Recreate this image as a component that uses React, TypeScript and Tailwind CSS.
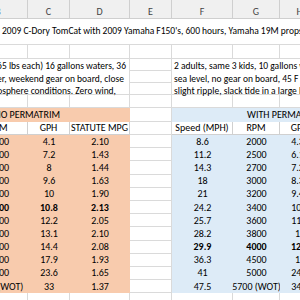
import clsx from 'clsx'

// column widths: B (clipped), C, D, E, F, G, H (clipped)
const W = ['w-[28px]', 'w-[42px]', 'w-[60px]', 'w-[42px]', 'w-[61px]', 'w-[47px]', 'w-[40px]']
const GRID = 'border-r border-b border-[#dadada]'
const ORANGE = 'bg-[#f8cbad]'
const BLUE = 'bg-[#ddebf7]'

const left = [
    ['2000', '4.1', '2.10'],
    ['2500', '7.2', '1.43'],
    ['2700', '8', '1.44'],
    ['3000', '9.6', '1.63'],
    ['3200', '10', '1.90'],
    ['3400', '10.8', '2.13'],
    ['3600', '12.2', '2.05'],
    ['3800', '13.1', '2.10'],
    ['4000', '14.4', '2.08'],
    ['4500', '17.9', '1.93'],
    ['5000', '23.6', '1.65'],
    ['5700 (WOT)', '33', '1.37'],
]

const right = [
    ['8.6', '2000', '4.35'],
    ['11.2', '2500', '6.10'],
    ['14.3', '2700', '7.25'],
    ['18', '3000', '8.30'],
    ['21', '3200', '9.40'],
    ['24.2', '3400', '10.5'],
    ['25.7', '3600', '11.4'],
    ['28.2', '3800', '13'],
    ['29.9', '4000', '12.6'],
    ['36.3', '4500', '17'],
    ['41', '5000', '24.1'],
    ['47.5', '5700 (WOT)', '34.7'],
]

function BCell({ children, className }: { children?: React.ReactNode; className?: string }) {
    // column B is cut by the left edge, its text centre sits just left of x=0
    return (
        <div className={clsx('shrink-0 flex justify-end items-center', W[0], className)}>
            <div className="w-[58px] shrink-0 text-center whitespace-nowrap">{children}</div>
        </div>
    )
}

function Cell({ i, children, className }: { i: number; children?: React.ReactNode; className?: string }) {
    return (
        <div className={clsx('shrink-0 flex items-center justify-center whitespace-nowrap', W[i], className)}>
            {children}
        </div>
    )
}

function EmptyRow({ h }: { h: string }) {
    return (
        <div className={clsx('flex', h)}>
            {W.map((_, i) => (
                <Cell key={i} i={i} className={GRID} />
            ))}
        </div>
    )
}

export default function App() {
    return (
        <div
            className="w-[300px] h-[300px] overflow-hidden bg-white text-[10px] leading-none text-black"
            style={{ fontFamily: 'Carlito, Calibri, Lato, "Open Sans", sans-serif' }}
        >
            {/* Column letters */}
            <div className="flex h-[19px] bg-[#f0f0f0] text-[#444]">
                <BCell className="border-r border-b border-[#cfcfcf] pt-[5px]">B</BCell>
                {['C', 'D', 'E', 'F', 'G', 'H'].map((l, k) => (
                    <Cell key={l} i={k + 1} className="border-r border-b border-[#cfcfcf] pt-[5px]">
                        {l}
                    </Cell>
                ))}
            </div>

            {/* Title */}
            <div className="flex items-center h-[26px] pl-[2px] border-b border-[#dadada] whitespace-nowrap text-[9.5px]">
                2009 C-Dory TomCat with 2009 Yamaha F150's, 600 hours, Yamaha 19M props, 14 x 19 pitch
            </div>

            <EmptyRow h="h-[14px]" />

            {/* Load descriptions */}
            <div className="flex h-[36px] text-[9.5px]">
                <div className="w-[130px] shrink-0 border-r border-b border-[#dadada] pt-[1px] leading-[12.5px]">
                    <div className="flex justify-end pr-[3px]">
                        <span className="shrink-0 whitespace-nowrap">3 kids (65 lbs each) 16 gallons waters, 36</span>
                    </div>
                    <div className="flex justify-end pr-[5px]">
                        <span className="shrink-0 whitespace-nowrap">gallons fuel, cooler, weekend gear on board, close</span>
                    </div>
                    <div className="flex justify-end pr-[13px]">
                        <span className="shrink-0 whitespace-nowrap">to sea level, standard atmosphere conditions. Zero wind,</span>
                    </div>
                </div>
                <div className="w-[42px] shrink-0 flex flex-col">
                    <div className={clsx('h-[12px]', GRID)} />
                    <div className={clsx('h-[12px]', GRID)} />
                    <div className={clsx('h-[12px]', GRID)} />
                </div>
                <div className="flex-1 border-b border-[#dadada] pl-[2px] pt-[1px] leading-[12.5px] whitespace-nowrap">
                    <div>2 adults, same 3 kids, 10 gallons water, 20 gallons fuel,</div>
                    <div>sea level, no gear on board, 45 F degrees, flat water,</div>
                    <div>slight ripple, slack tide in a large bay.</div>
                </div>
            </div>

            <EmptyRow h="h-[13px]" />

            {/* Table titles */}
            <div className="flex h-[14px]">
                <div className={clsx('w-[130px] shrink-0 flex items-center', ORANGE)}>
                    <div className="w-[60px] shrink-0 flex justify-end">
                        <span className="shrink-0 whitespace-nowrap">NO PERMATRIM</span>
                    </div>
                </div>
                <Cell i={3} className={GRID} />
                <div className={clsx('flex-1 flex items-center pl-[75px] whitespace-nowrap', BLUE)}>
                    WITH PERMATRIM
                </div>
            </div>

            {/* Column titles */}
            <div className="flex h-[13px]">
                <BCell className="border-r border-b border-[#d0d0d0]">RPM</BCell>
                <Cell i={1} className="border-r border-b border-[#d0d0d0]">GPH</Cell>
                <Cell i={2} className="border-r border-b border-[#d0d0d0]">STATUTE MPG</Cell>
                <Cell i={3} className={GRID} />
                <Cell i={4} className="border-r border-b border-[#d0d0d0]">Speed (MPH)</Cell>
                <Cell i={5} className="border-r border-b border-[#d0d0d0]">RPM</Cell>
                <Cell i={6} className="border-r border-b border-[#d0d0d0]">GPH</Cell>
            </div>

            {/* Data */}
            {left.map((row, r) => {
                const rr = right[r]
                return (
                    <div key={r} className="flex h-[13.2px]">
                        <BCell className={clsx(ORANGE, r === 5 && 'font-bold')}>{row[0]}</BCell>
                        <Cell i={1} className={clsx(ORANGE, r === 5 && 'font-bold')}>{row[1]}</Cell>
                        <Cell i={2} className={clsx(ORANGE, r === 5 && 'font-bold')}>{row[2]}</Cell>
                        <Cell i={3} className={GRID} />
                        <Cell i={4} className={clsx(BLUE, r === 8 && 'font-bold')}>{rr[0]}</Cell>
                        <Cell i={5} className={clsx(BLUE, r === 8 && 'font-bold')}>{rr[1]}</Cell>
                        <Cell i={6} className={clsx(BLUE, r === 8 && 'font-bold')}>{rr[2]}</Cell>
                    </div>
                )
            })}

            <EmptyRow h="h-[14px]" />
        </div>
    )
}
